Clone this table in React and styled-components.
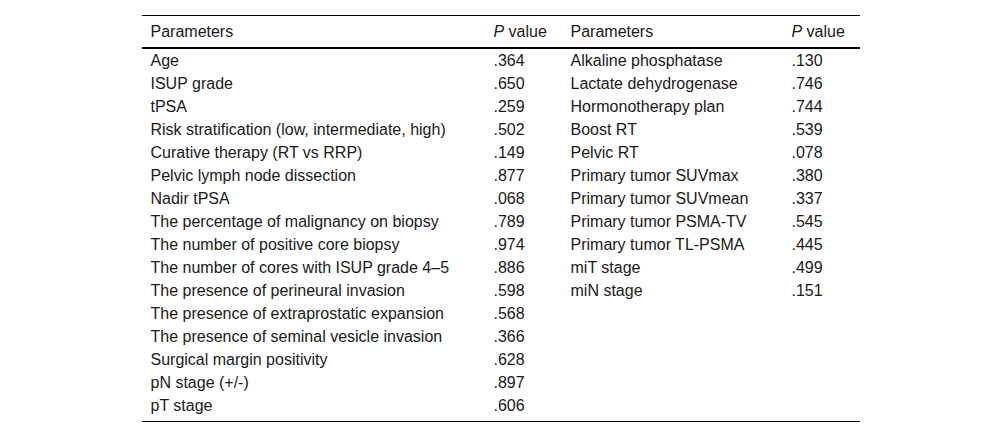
import React from "react";
import styled, { createGlobalStyle } from "styled-components";

const GlobalStyle = createGlobalStyle`
  html, body {
    margin: 0;
    padding: 0;
    background: #ffffff;
  }
`;

const Page = styled.div`
  width: 1000px;
  height: 438px;
  padding-top: 15px;
  box-sizing: border-box;
  display: flex;
  justify-content: center;
  font-family: "Liberation Sans", Arial, sans-serif;
  font-size: 16px;
  color: #1a1a1a;
`;

const Table = styled.table`
  width: 718px;
  margin-left: 1px;
  border-collapse: collapse;
  border-top: 1px solid #000;
  border-bottom: 1px solid #000;
  align-self: flex-start;
  table-layout: fixed;
`;

const HeadCell = styled.th`
  text-align: left;
  font-weight: normal;
  height: 31px;
  padding: 0 0 0 9px;
  border-bottom: 2px solid #000;
  vertical-align: middle;
  white-space: nowrap;
`;

const Cell = styled.td`
  height: 23px;
  line-height: 23px;
  padding: 0 0 0 9px;
  vertical-align: top;
  white-space: nowrap;
`;

const Row = styled.tr`
  &:last-child td {
    padding-bottom: 4px;
  }
`;

const left = [
  ["Age", ".364"],
  ["ISUP grade", ".650"],
  ["tPSA", ".259"],
  ["Risk stratification (low, intermediate, high)", ".502"],
  ["Curative therapy (RT vs RRP)", ".149"],
  ["Pelvic lymph node dissection", ".877"],
  ["Nadir tPSA", ".068"],
  ["The percentage of malignancy on biopsy", ".789"],
  ["The number of positive core biopsy", ".974"],
  ["The number of cores with ISUP grade 4\u20135", ".886"],
  ["The presence of perineural invasion", ".598"],
  ["The presence of extraprostatic expansion", ".568"],
  ["The presence of seminal vesicle invasion", ".366"],
  ["Surgical margin positivity", ".628"],
  ["pN stage (+/-)", ".897"],
  ["pT stage", ".606"],
];

const right = [
  ["Alkaline phosphatase", ".130"],
  ["Lactate dehydrogenase", ".746"],
  ["Hormonotherapy plan", ".744"],
  ["Boost RT", ".539"],
  ["Pelvic RT", ".078"],
  ["Primary tumor SUVmax", ".380"],
  ["Primary tumor SUVmean", ".337"],
  ["Primary tumor PSMA-TV", ".545"],
  ["Primary tumor TL-PSMA", ".445"],
  ["miT stage", ".499"],
  ["miN stage", ".151"],
];

const PValue = () => (
  <>
    <i>P</i> value
  </>
);

const App = () => {
  return (
    <Page>
      <GlobalStyle />
      <Table>
        <colgroup>
          <col style={{ width: 343 }} />
          <col style={{ width: 77 }} />
          <col style={{ width: 221 }} />
          <col style={{ width: 77 }} />
        </colgroup>
        <thead>
          <tr>
            <HeadCell>Parameters</HeadCell>
            <HeadCell>
              <PValue />
            </HeadCell>
            <HeadCell>Parameters</HeadCell>
            <HeadCell>
              <PValue />
            </HeadCell>
          </tr>
        </thead>
        <tbody>
          {left.map((item, i) => (
            <Row key={i}>
              <Cell>{item[0]}</Cell>
              <Cell>{item[1]}</Cell>
              <Cell>{right[i] ? right[i][0] : ""}</Cell>
              <Cell>{right[i] ? right[i][1] : ""}</Cell>
            </Row>
          ))}
        </tbody>
      </Table>
    </Page>
  );
};

export default App;
